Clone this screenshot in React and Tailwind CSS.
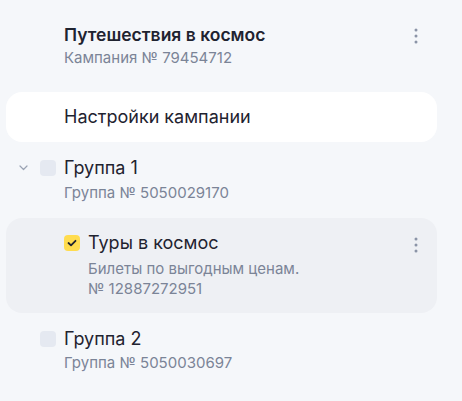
import React from "react";

const Dots = () => (
  <svg width="4" height="16" viewBox="0 0 4 16" className="shrink-0">
    <circle cx="2" cy="2" r="1.5" fill="#8b94a7" />
    <circle cx="2" cy="8" r="1.5" fill="#8b94a7" />
    <circle cx="2" cy="14" r="1.5" fill="#8b94a7" />
  </svg>
);

const Box = () => <div className="w-4 h-4 rounded-[4px] bg-[#e5e9f1] shrink-0" />;

const Checked = () => (
  <div className="w-4 h-4 rounded-[4px] bg-[#ffdc4f] shrink-0 flex items-center justify-center">
    <svg width="10" height="8" viewBox="0 0 10 8">
      <path d="M1.5 4 L4 6.3 L8.5 1.8" stroke="#1f2330" strokeWidth="1.8" fill="none" strokeLinecap="round" strokeLinejoin="round" />
    </svg>
  </div>
);

export default function App() {
  return (
    <div className="w-[462px] h-[401px] bg-[#f5f7fa] overflow-hidden text-[#1f2330]" style={{ fontFamily: "Inter, 'Noto Sans', sans-serif" }}>
      <div className="pt-[23px] pl-[64px] pr-[44px] flex justify-between items-start">
        <div>
          <div className="text-[17.5px] leading-[24px] font-semibold">Путешествия в космос</div>
          <div className="text-[15px] leading-[20px] text-[#7b8497] mt-[1px]">Кампания № 79454712</div>
        </div>
        <div className="pt-[5px]"><Dots /></div>
      </div>

      <div className="mt-[24px] ml-[6px] w-[431px] h-[50px] bg-white rounded-[16px] flex items-center pl-[58px]">
        <span className="text-[18px] leading-[24px]">Настройки кампании</span>
      </div>

      <div className="mt-[14px] flex">
        <div className="w-[40px] h-[24px] flex items-center justify-end pr-[12px]">
          <svg width="9" height="6" viewBox="0 0 9 6">
            <path d="M1 1 L4.5 4.5 L8 1" stroke="#9aa3b3" strokeWidth="1.2" fill="none" strokeLinecap="round" strokeLinejoin="round" />
          </svg>
        </div>
        <div className="h-[24px] flex items-center"><Box /></div>
        <div className="pl-[8px]">
          <div className="text-[18px] leading-[24px]">Группа 1</div>
          <div className="text-[15px] leading-[20px] text-[#7b8497] mt-[3px]">Группа № 5050029170</div>
        </div>
      </div>

      <div className="mt-[15px] ml-[6px] w-[431px] bg-[#eef0f4] rounded-[16px] pt-[13px] pb-[14px] pl-[58px] pr-[19px] flex">
        <div className="h-[24px] flex items-center"><Checked /></div>
        <div className="pl-[8px] flex-1">
          <div className="text-[18px] leading-[24px]">Туры в космос</div>
          <div className="text-[15px] leading-[20px] text-[#7b8497] mt-[4px]">
            Билеты по выгодным ценам.
            <br />
            № 12887272951
          </div>
        </div>
        <div className="pt-[6px]"><Dots /></div>
      </div>

      <div className="mt-[14px] flex pl-[40px]">
        <div className="h-[24px] flex items-center"><Box /></div>
        <div className="pl-[8px]">
          <div className="text-[18px] leading-[24px]">Группа 2</div>
          <div className="text-[15px] leading-[20px] text-[#7b8497] mt-[2px]">Группа № 5050030697</div>
        </div>
      </div>
    </div>
  );
}
